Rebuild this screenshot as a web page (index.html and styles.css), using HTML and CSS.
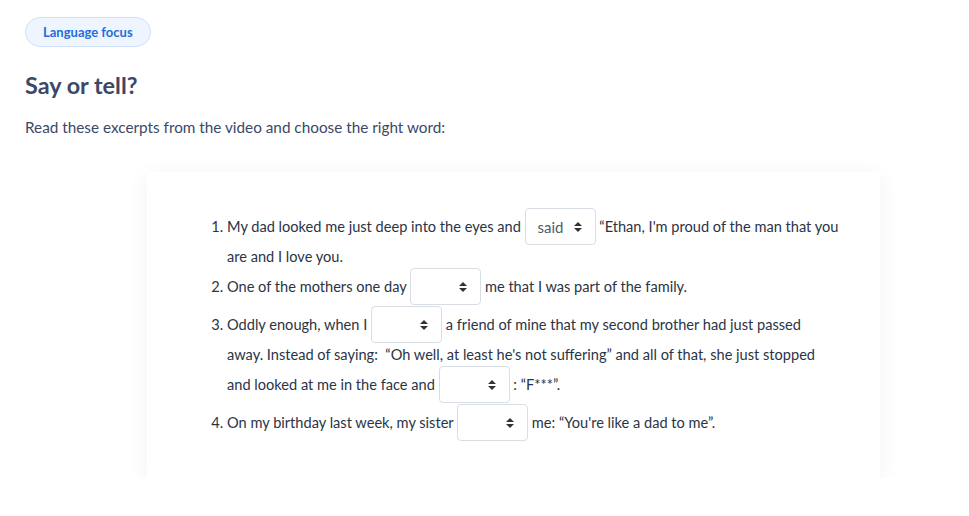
FILE: index.html
```html
<!DOCTYPE html>
<html lang="en">
<head>
<meta charset="utf-8">
<title>Say or tell?</title>
<link rel="stylesheet" href="styles.css">
</head>
<body>
<main class="page">
  <span class="badge">Language focus</span>
  <h1 class="title">Say or tell?</h1>
  <p class="intro">Read these excerpts from the video and choose the right word:</p>
  <section class="card">
    <ol class="excerpts">
      <li>My dad looked me just deep into the eyes and <select class="pick"><option>said</option><option>told</option></select> “Ethan, I'm proud of the man that you are and I love you.</li>
      <li>One of the mothers one day <select class="pick"><option></option><option>said</option><option>told</option></select> me that I was part of the family.</li>
      <li>Oddly enough, when I <select class="pick"><option></option><option>said</option><option>told</option></select> a friend of mine that my second brother had just passed away. Instead of saying:&nbsp; “Oh well, at least he's not suffering” and all of that, she just stopped and looked at me in the face and <select class="pick"><option></option><option>said</option><option>told</option></select> : “F***”.</li>
      <li>On my birthday last week, my sister <select class="pick"><option></option><option>said</option><option>told</option></select> me: “You're like a dad to me”.</li>
    </ol>
  </section>
</main>
</body>
</html>
```

FILE: styles.css
```css
html, body {
  margin: 0;
  padding: 0;
  background: #ffffff;
}

body {
  font-family: Lato, "Noto Sans", sans-serif;
  color: #2b3445;
}

.page {
  padding: 17px 25px 0 25px;
}

.badge {
  display: inline-block;
  box-sizing: border-box;
  height: 30px;
  line-height: 28px;
  padding: 0 17px;
  border: 1px solid #cfe1f8;
  border-radius: 15px;
  background: #eef5fe;
  color: #1d6fdc;
  font-size: 13px;
  font-weight: 700;
}

.title {
  margin: 23px 0 0 0;
  font-size: 23.4px;
  line-height: 30px;
  font-weight: 700;
  color: #3b4868;
}

.intro {
  margin: 15px 0 0 0;
  font-size: 15.3px;
  line-height: 24px;
  color: #3b4868;
}

.card {
  width: 733px;
  box-sizing: border-box;
  margin: 33px 0 0 122px;
  padding: 36px 40px 36px 40px;
  background: #ffffff;
  box-shadow: 0 4px 22px rgba(0, 0, 0, 0.055);
}

.excerpts {
  margin: 0;
  padding-left: 40px;
  font-size: 14.6px;
  line-height: 22px;
  color: #2b3445;
}

.pick {
  -webkit-appearance: none;
  appearance: none;
  box-sizing: border-box;
  width: 71px;
  height: 37px;
  margin: 0 0 1px 0;
  padding: 0 20px 0 12px;
  vertical-align: -1px;
  border: 1px solid #d9dde4;
  border-radius: 4px;
  background-color: #ffffff;
  background-image: url("data:image/svg+xml,%3Csvg xmlns='http://www.w3.org/2000/svg' width='8' height='10' viewBox='0 0 8 10'%3E%3Cpath d='M4 0 L8 4 L0 4 Z M0 6 L8 6 L4 10 Z' fill='%23333'/%3E%3C/svg%3E");
  background-repeat: no-repeat;
  background-position: right 13px center;
  background-size: 8px 10px;
  font-family: Lato, "Noto Sans", sans-serif;
  font-size: 15px;
  color: #555b66;
}
```
